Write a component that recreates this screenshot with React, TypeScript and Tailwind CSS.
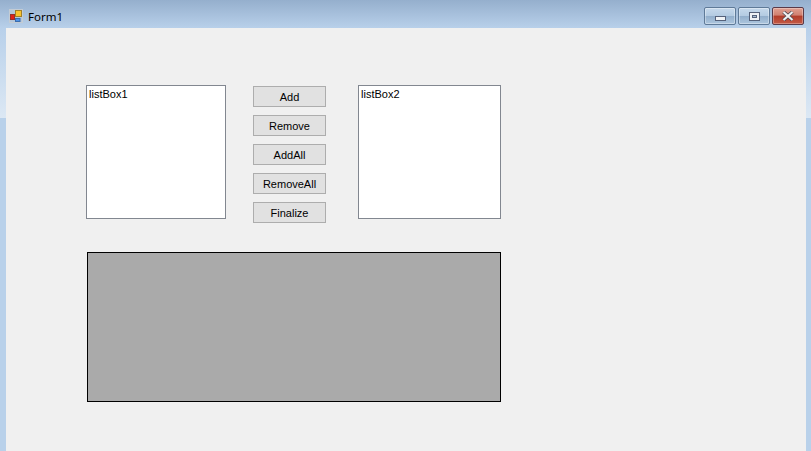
function AppIcon() {
  return (
    <svg width="14" height="14" viewBox="0 0 14 14" className="shrink-0">
      <rect x="0.5" y="0.5" width="13" height="13" fill="#b4c6da" stroke="#c4ccd4" />
      <rect x="1.5" y="5.5" width="4" height="5" fill="#e0201a" stroke="#96302a" />
      <rect x="6.5" y="1.5" width="6" height="6" fill="#f8c22e" stroke="#a08028" />
      <rect x="6.5" y="9.5" width="4.5" height="3" fill="#4f93e6" stroke="#3a6cae" />
    </svg>
  );
}

function CaptionButton({ kind }: { kind: "min" | "max" | "close" }) {
  if (kind === "close") {
    return (
      <div className="w-[32px] h-[18px] rounded-[2px] border border-[#5a3a48] flex items-center justify-center bg-[linear-gradient(to_bottom,#e0a092_0%,#d08070_45%,#b23c2a_50%,#c45a46_100%)] shadow-[inset_0_0_0_1px_rgba(255,255,255,0.3)]">
        <svg width="14" height="10" viewBox="0 0 14 10">
          <path d="M2.5 1 L11.5 9 M11.5 1 L2.5 9" stroke="#4a4650" strokeWidth="3.6" />
          <path d="M2.5 1 L11.5 9 M11.5 1 L2.5 9" stroke="#f2f2f2" strokeWidth="2.2" />
        </svg>
      </div>
    );
  }
  return (
    <div className="w-[32px] h-[18px] rounded-[2px] border border-[#5f7a98] flex items-center justify-center bg-[linear-gradient(to_bottom,#c6d9ec_0%,#b4cbe2_48%,#93afcc_52%,#adc6de_100%)] shadow-[inset_0_0_0_1px_rgba(255,255,255,0.35)]">
      {kind === "min" ? (
        <div className="w-[11px] h-[5px] mt-[5px] border border-[#55617a] bg-[#f0f3f6]" />
      ) : (
        <div className="w-[11px] h-[9px] border border-[#55617a] bg-[#eef1f5] flex items-center justify-center">
          <div className="w-[5px] h-[3px] border border-[#55617a] bg-[#a8bdd4]" />
        </div>
      )}
    </div>
  );
}

function ListBox({ label, width }: { label: string; width: string }) {
  return (
    <div className={`${width} h-[134px] shrink-0 bg-white border border-[#828790] pl-[2px] text-[11px] leading-[16px] text-black`}>
      {label}
    </div>
  );
}

function FormButton({ label }: { label: string }) {
  return (
    <button className="w-[73px] h-[21px] pt-[1px] border border-[#adadad] bg-[#e1e1e1] text-[11px] leading-none text-black">
      {label}
    </button>
  );
}

export default function App() {
  const buttons = ["Add", "Remove", "AddAll", "RemoveAll", "Finalize"];

  return (
    <div className="w-[811px] h-[451px] overflow-hidden flex flex-col bg-[linear-gradient(to_bottom,#95afcd_0px,#b8d0ea_28px,#dce8f4_118px,#b9d1ea_118px,#b9d1ea_451px)] font-['Liberation_Sans',sans-serif]">
      <div className="h-[28px] shrink-0 flex items-center pt-[4px] pl-[9px] pr-[7px]">
        <AppIcon />
        <span className="ml-[5px] mt-[1px] text-[11.5px] font-['Noto_Sans',sans-serif] text-black">Form1</span>
        <div className="ml-auto flex gap-[2px]">
          <CaptionButton kind="min" />
          <CaptionButton kind="max" />
          <CaptionButton kind="close" />
        </div>
      </div>
      <div className="flex-1 ml-[6px] mr-[5px] bg-[#f0f0f0] pl-[80px] pt-[57px]">
        <div className="flex items-start">
          <ListBox label="listBox1" width="w-[140px]" />
          <div className="ml-[27px] mt-[1px] flex flex-col gap-[8px]">
            {buttons.map((b) => (
              <FormButton key={b} label={b} />
            ))}
          </div>
          <div className="ml-[32px]">
            <ListBox label="listBox2" width="w-[143px]" />
          </div>
        </div>
        <div className="mt-[29px] ml-[1px] w-[414px] h-[150px] bg-[#aaaaaa] border border-black" />
      </div>
    </div>
  );
}
